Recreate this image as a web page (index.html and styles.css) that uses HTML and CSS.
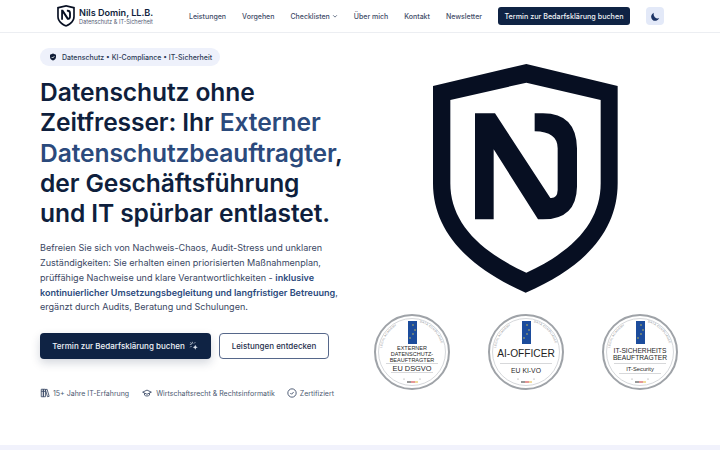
FILE: index.html
```html
<!DOCTYPE html>
<html lang="de">
<head>
    <meta charset="UTF-8">
    <meta name="viewport" content="width=device-width, initial-scale=1.0">
    <title>Nils Domin, LL.B.</title>
    <link rel="stylesheet" href="styles.css">
</head>
<body>
    <svg class="defs" width="0" height="0">
        <symbol id="shield" viewBox="40 -18 555 690">
            <path fill-rule="evenodd" d="M320 -18 L594 48 V340 C594 480 500 590 318 668 C140 590 40 480 40 340 V48 Z M320 38 L92 90 V340 C92 450 170 540 320 608 C470 540 543 450 543 340 V90 Z"/>
            <path d="M166 130 H226 L392 384 Q413 386 414 360 V235 Q414 185 345 184 V130 H370 Q470 130 472 235 V350 Q470 448 370 448 H355 L222 238 V448 H166 Z"/>
        </symbol>
        <symbol id="ring" viewBox="0 0 80 80">
            <circle cx="40" cy="40" r="37" fill="#fff" stroke="#9fa3a8" stroke-width="2"/>
            <circle cx="40" cy="40" r="33.5" fill="none" stroke="#c4c7cb" stroke-width="0.7"/>
            <rect x="36" y="9" width="9" height="23" fill="#1c4c9c"/>
            <circle cx="41" cy="13" r="0.7" fill="#f2d64b"/>
            <circle cx="43" cy="18" r="0.7" fill="#f2d64b"/>
            <circle cx="41" cy="22" r="0.7" fill="#f2d64b"/>
            <circle cx="38" cy="26" r="0.7" fill="#f2d64b"/>
            <circle cx="32" cy="67" r="0.5" fill="#777"/>
            <circle cx="48" cy="67" r="0.5" fill="#777"/>
            <rect x="35" y="69.5" width="4" height="1" fill="#333"/>
            <rect x="39" y="69.5" width="4" height="1" fill="#c33"/>
            <rect x="43" y="69.5" width="3" height="1" fill="#e3b93c"/>
        </symbol>
        <path id="arc-l" d="M10 42 A30 30 0 0 1 35 10" fill="none"/>
        <path id="arc-r" d="M46 10 A30 30 0 0 1 70 42" fill="none"/>
    </svg>

    <header class="topbar">
        <a class="brand" href="#">
            <svg class="brand-logo"><use href="#shield"/></svg>
            <span class="brand-text">
                <strong>Nils Domin, LL.B.</strong>
                <small>Datenschutz &amp; IT-Sicherheit</small>
            </span>
        </a>
        <nav class="nav">
            <a href="#">Leistungen</a>
            <a href="#">Vorgehen</a>
            <a href="#" class="has-menu">Checklisten
                <svg viewBox="0 0 8 8" class="chev"><path d="M1.5 3 L4 5.5 L6.5 3"/></svg>
            </a>
            <a href="#">Über mich</a>
            <a href="#">Kontakt</a>
            <a href="#">Newsletter</a>
        </nav>
        <a class="nav-cta" href="#">Termin zur Bedarfsklärung buchen</a>
        <button class="theme" aria-label="Farbschema">
            <svg viewBox="0 0 24 24"><path d="M20 15.5A9 9 0 0 1 8.5 4a9 9 0 1 0 11.5 11.500Z"/></svg>
        </button>
    </header>

    <main class="hero">
        <section class="hero-text">
            <div class="pill">
                <svg viewBox="0 0 24 24"><path d="M12 1.500 21 5v7c0 5.500-4 9-9 10.500C7 21 3 17.500 3 12V5Z"/><path class="tick" d="M8 12l3 3 5-5.500"/></svg>
                Datenschutz • KI-Compliance • IT-Sicherheit
            </div>
            <h1>Datenschutz ohne Zeitfresser: Ihr <em>Externer Datenschutzbeauftragter</em>, der Geschäftsführung und IT spürbar entlastet.</h1>
            <p class="lead">Befreien Sie sich von Nachweis-Chaos, Audit-Stress und unklaren Zuständigkeiten: Sie erhalten einen priorisierten Maßnahmenplan, prüffähige Nachweise und klare Verantwortlichkeiten - <strong>inklusive kontinuierlicher Umsetzungsbegleitung und langfristiger Betreuung</strong>, ergänzt durch Audits, Beratung und Schulungen.</p>
            <div class="actions">
                <a class="btn btn-main" href="#">Termin zur Bedarfsklärung buchen
                    <svg viewBox="0 0 24 24"><path d="M8 2v4M2 8h4M3.500 3.500l3 3M15 3l-3 3M3 15l3-3"/><path class="spark" d="M15 9l1.800 4.200L21 15l-4.200 1.800L15 21l-1.800-4.200L9 15l4.200-1.800Z"/></svg>
                </a>
                <a class="btn btn-line" href="#">Leistungen entdecken</a>
            </div>
            <ul class="trust">
                <li><svg viewBox="0 0 24 24"><path d="M3 3h5v18H3ZM8 3h5v18H8ZM13 4l4-1 5 17-4 1ZM3 8h5M8 8h5"/></svg>15+ Jahre IT-Erfahrung</li>
                <li><svg class="cap" viewBox="0 0 24 24"><path d="M12 5 1.500 10 12 15l10.500-5ZM6 12.500V17c3 3 9 3 12 0v-4.500"/></svg>Wirtschaftsrecht &amp; Rechtsinformatik</li>
                <li><svg viewBox="0 0 24 24"><circle cx="12" cy="12" r="10"/><path d="M8 12l3 3 5-5.500"/></svg>Zertifiziert</li>
            </ul>
        </section>

        <section class="hero-art">
            <svg class="shield-big"><use href="#shield"/></svg>
            <div class="badges">
                <svg class="badge" viewBox="0 0 80 80">
                    <use href="#ring"/>
                    <text class="tiny"><textPath href="#arc-l" startOffset="6">LEGAL ACADEMY</textPath></text>
                    <text class="tiny"><textPath href="#arc-r" startOffset="2">DATA COMPLIANCE</textPath></text>
                    <text x="40" y="37.500" class="b-sm">EXTERNER</text>
                    <text x="40" y="43.500" class="b-sm">DATENSCHUTZ-</text>
                    <text x="40" y="49.500" class="b-sm">BEAUFTRAGTER</text>
                    <path class="b-rule" d="M14 51.500H66M19 60.500H61"/>
                    <text x="40" y="58.500" class="b-md">EU DSGVO</text>
                </svg>
                <svg class="badge" viewBox="0 0 80 80">
                    <use href="#ring"/>
                    <text class="tiny"><textPath href="#arc-l" startOffset="6">LEGAL ACADEMY</textPath></text>
                    <text class="tiny"><textPath href="#arc-r" startOffset="2">DATA COMPLIANCE</textPath></text>
                    <text x="40" y="45" class="b-lg">AI-OFFICER</text>
                    <path class="b-rule" d="M14 51.500H66"/>
                    <text x="40" y="61" class="b-md2">EU KI-VO</text>
                </svg>
                <svg class="badge" viewBox="0 0 80 80">
                    <use href="#ring"/>
                    <text class="tiny"><textPath href="#arc-l" startOffset="6">LEGAL ACADEMY</textPath></text>
                    <text class="tiny"><textPath href="#arc-r" startOffset="2">DATA COMPLIANCE</textPath></text>
                    <text x="40" y="41" class="b-it">IT-SICHERHEITS</text>
                    <text x="40" y="48" class="b-it">BEAUFTRAGTER</text>
                    <path class="b-rule" d="M14 51.500H66M19 61.500H61"/>
                    <text x="40" y="59" class="b-xs">IT-Security</text>
                </svg>
            </div>
        </section>
    </main>
    <div class="next-band"></div>
</body>
</html>
```

FILE: styles.css
```css
* {
    box-sizing: border-box;
}

html, body {
    margin: 0;
    height: 450px;
    overflow: hidden;
}

body {
    font-family: 'Inter', 'Liberation Sans', sans-serif;
    background-color: #fff;
    color: #0f1f3d;
    display: flex;
    flex-direction: column;
}

a {
    color: inherit;
    text-decoration: none;
}

.defs {
    position: absolute;
}

.topbar {
    height: 33px;
    flex: none;
    display: flex;
    align-items: center;
    padding: 0 56px 0 57px;
    border-bottom: 1px solid #eceef2;
}

.brand {
    display: flex;
    align-items: center;
    gap: 4px;
    width: 132px;
    flex: none;
}

.brand-logo {
    width: 18px;
    height: 22px;
    fill: #070f22;
    flex: none;
}

.brand-text {
    display: flex;
    flex-direction: column;
    white-space: nowrap;
}

.brand-text strong {
    font-size: 9.1px;
    font-weight: 600;
    line-height: 11px;
}

.brand-text small {
    font-size: 5.6px;
    line-height: 8px;
    color: #556075;
}

.nav {
    display: flex;
    gap: 16px;
    font-size: 7px;
    color: #3f4d68;
    font-weight: 500;
    white-space: nowrap;
}

.has-menu {
    display: flex;
    align-items: center;
    gap: 2px;
}

.chev {
    width: 6px;
    height: 6px;
    fill: none;
    stroke: #3f4d68;
    stroke-width: 1;
}

.nav-cta {
    margin-left: 16px;
    width: 132px;
    height: 18px;
    flex: none;
    display: flex;
    align-items: center;
    justify-content: center;
    background: #0f2344;
    color: #f2f4f8;
    border-radius: 3px;
    font-size: 7.2px;
    font-weight: 500;
    white-space: nowrap;
}

.theme {
    margin-left: auto;
    width: 18px;
    height: 18px;
    flex: none;
    padding: 0;
    border: none;
    border-radius: 4px;
    background: #e3e9f8;
    display: flex;
    align-items: center;
    justify-content: center;
}

.theme svg {
    width: 11px;
    height: 11px;
    fill: #1c3466;
}

.hero {
    flex: 1;
    display: flex;
    padding-left: 40px;
}

.hero-text {
    width: 311px;
    flex: none;
    padding-top: 15px;
}

.pill {
    width: 180px;
    height: 18px;
    display: flex;
    align-items: center;
    gap: 5px;
    padding-left: 9px;
    background: #eef1fb;
    border-radius: 9px;
    font-size: 7px;
    font-weight: 500;
    color: #2c3a55;
    white-space: nowrap;
}

.pill svg {
    width: 8px;
    height: 8px;
    flex: none;
    fill: #101d38;
}

.pill .tick {
    fill: none;
    stroke: #fff;
    stroke-width: 2.500;
}

h1 {
    margin: 11px 0 0;
    max-width: 305px;
    font-size: 24.6px;
    line-height: 30.3px;
    font-weight: 600;
    letter-spacing: -0.1px;
    color: #0f1f3d;
}

h1 em {
    font-style: normal;
    color: #2b4a7c;
}

.lead {
    margin: 13px 0 0;
    font-size: 9.05px;
    line-height: 14.7px;
    color: #3a4763;
}

.lead strong {
    font-weight: 600;
    color: #2b4a7c;
}

.actions {
    display: flex;
    gap: 8px;
    margin-top: 18px;
}

.btn {
    height: 26px;
    display: flex;
    align-items: center;
    justify-content: center;
    gap: 4px;
    border-radius: 4px;
    font-size: 8px;
    font-weight: 500;
    white-space: nowrap;
}

.btn-main {
    width: 171px;
    background: #0f2344;
    color: #f0f3f8;
    box-shadow: 0 4px 10px rgba(15, 35, 68, 0.18);
}

.btn-main svg {
    width: 10px;
    height: 10px;
    flex: none;
    fill: none;
    stroke: #dfe5f0;
    stroke-width: 1.800;
}

.btn-main .spark {
    fill: #dfe5f0;
    stroke: none;
}

.btn-line {
    width: 110px;
    border: 1px solid #56678a;
    color: #1f2f4e;
    background: #fff;
}

.trust {
    list-style: none;
    margin: 29px 0 0;
    padding: 0;
    display: flex;
    gap: 12px;
    font-size: 7px;
    color: #4b5870;
    white-space: nowrap;
}

.trust li {
    display: flex;
    align-items: center;
    gap: 3px;
}

.trust svg {
    width: 10px;
    height: 10px;
    flex: none;
    fill: none;
    stroke: #33425f;
    stroke-width: 2;
}

.trust .cap {
    width: 12px;
}

.hero-art {
    flex: 1;
    display: flex;
    flex-direction: column;
    align-items: center;
    padding-top: 31px;
    padding-right: 20px;
}

.shield-big {
    width: 185px;
    height: 230px;
    fill: #070f22;
}

.badges {
    display: flex;
    gap: 34px;
    margin-top: 18px;
}

.badge {
    width: 80px;
    height: 80px;
    font-family: 'Liberation Sans', sans-serif;
}

.badge text {
    text-anchor: middle;
    fill: #1f1f1f;
}

.badge .tiny {
    font-size: 3px;
    fill: #8a8d91;
    letter-spacing: 0.2px;
    text-anchor: start;
}

.b-sm {
    font-size: 5.5px;
}

.b-md {
    font-size: 7.400px;
}

.b-md2 {
    font-size: 6.800px;
}

.b-lg {
    font-size: 10.200px;
}

.b-it {
    font-size: 6.700px;
}

.b-xs {
    font-size: 5.800px;
}

.b-rule {
    stroke: #9a9da2;
    stroke-width: 0.4;
    fill: none;
}

.next-band {
    height: 5px;
    flex: none;
    background: #f1f2fc;
}
```
